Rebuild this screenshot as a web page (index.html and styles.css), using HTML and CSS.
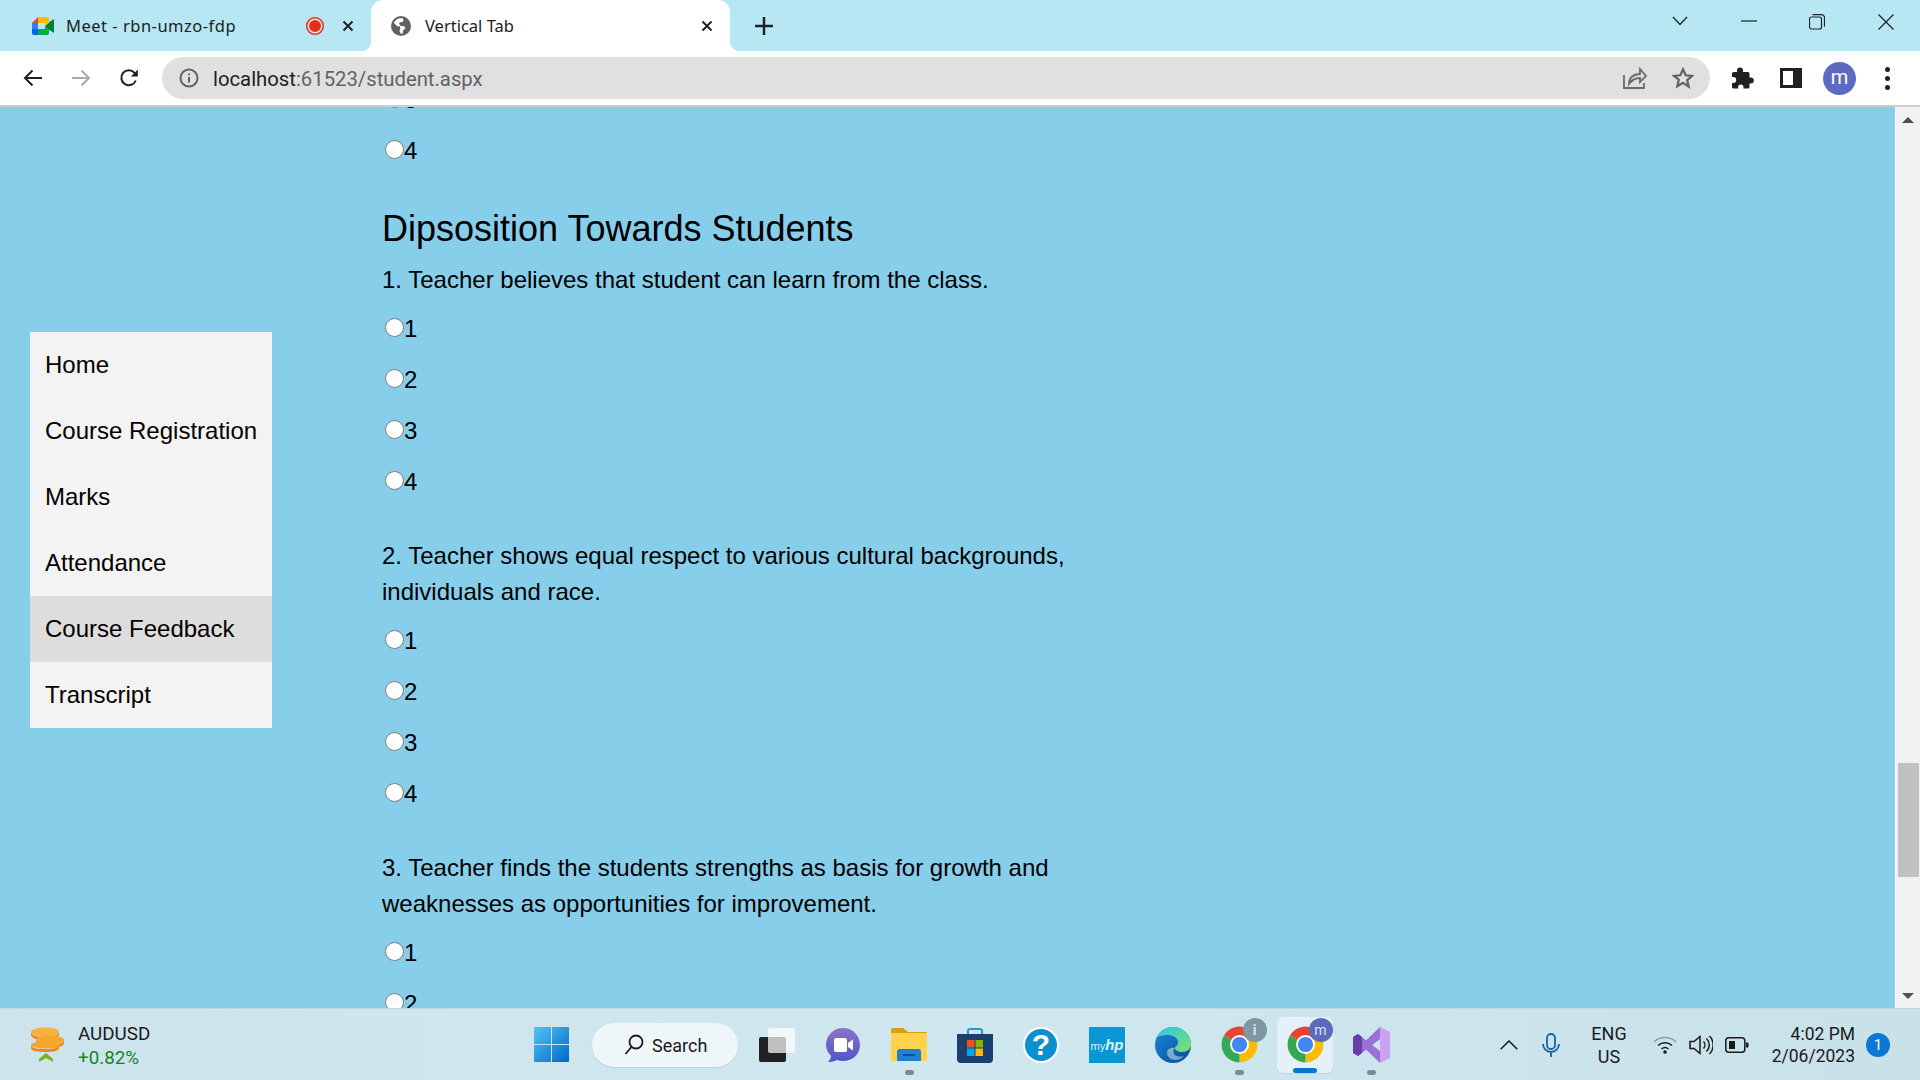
FILE: index.html
```html
<!DOCTYPE html>
<html lang="en">
<head>
<meta charset="utf-8">
<title>Vertical Tab</title>
<link rel="stylesheet" href="styles.css">
</head>
<body>
<svg class="defs" width="0" height="0">
  <symbol id="chrome" viewBox="0 0 48 48">
    <path fill="#ea4335" d="M24 24L6.7 14A20 20 0 0 1 41.3 14Z"/>
    <path fill="#fbbc04" d="M24 24L41.3 14A20 20 0 0 1 24 44Z"/>
    <path fill="#34a853" d="M24 24L24 44A20 20 0 0 1 6.7 14Z"/>
    <circle cx="24" cy="24" r="10.5" fill="#fff"/>
    <circle cx="24" cy="24" r="8.5" fill="#4285f4"/>
  </symbol>
</svg>

<header class="tabstrip">
  <div class="tab tab-meet">
    <svg class="fav-meet" viewBox="0 0 24 20" width="24" height="20">
      <path fill="#00832d" d="M14 10l3-3 6-4v14l-6-4z"/>
      <path fill="#0066da" d="M1 13v4a2 2 0 0 0 2 2h4v-6z"/>
      <path fill="#e94235" d="M7 1L1 7h6z"/>
      <path fill="#2684fc" d="M1 7h6v6H1z"/>
      <path fill="#00ac47" d="M7 13h7v-3l4 3v4a2 2 0 0 1-2 2H7z"/>
      <path fill="#ffba00" d="M7 1h9a2 2 0 0 1 2 2v4l-4 3V7H7z"/>
    </svg>
    <span class="tab-title">Meet - rbn-umzo-fdp</span>
    <span class="rec"></span>
    <svg class="tab-x" viewBox="0 0 12 12" width="12" height="12"><path d="M1.5 1.5l9 9M10.5 1.5l-9 9"/></svg>
  </div>
  <div class="tab tab-active">
    <svg class="fav-globe" viewBox="0 0 20 20" width="20" height="20">
      <circle cx="10" cy="10" r="10" fill="#5f6368"/>
      <path fill="#fff" d="M9 2.2C6 2.6 3.9 4.6 2.9 7l3.6 3.4 2.3-.2.6 2.4-1 2.2 1.3 2.9c.6 0 1.300-.1 1.800-.2l.9-3.600 2-1.700-1.500-2.200H9.600L8 7.300l1.600-1.400 1.700.4L12.600 4 11.500 2.300z"/>
    </svg>
    <span class="tab-title">Vertical Tab</span>
    <svg class="tab-x" viewBox="0 0 12 12" width="12" height="12"><path d="M1.500 1.500l9 9M10.500 1.500l-9 9"/></svg>
  </div>
  <svg class="newtab" viewBox="0 0 18 18" width="18" height="18"><path d="M9 0v18M0 9h18"/></svg>
  <div class="winctl">
    <svg class="ctl ctl-chev" viewBox="0 0 16 10" width="16" height="10"><path d="M1 1l7 7.500L15 1"/></svg>
    <svg class="ctl ctl-min" viewBox="0 0 16 2" width="16" height="2"><path d="M0 1h16"/></svg>
    <svg class="ctl ctl-max" viewBox="0 0 16 16" width="16" height="16"><rect x=".5" y="3" width="12" height="12" rx="2"/><path d="M3.500 .7h9a3 3 0 0 1 3 3v9"/></svg>
    <svg class="ctl ctl-close" viewBox="0 0 16 16" width="16" height="16"><path d="M.5 .5l15 15M15.500 .5l-15 15"/></svg>
  </div>
</header>

<nav class="toolbar">
  <svg class="tb tb-back" viewBox="0 0 20 20" width="20" height="20"><path d="M19 10H2M9.500 2.500L2 10l7.500 7.500"/></svg>
  <svg class="tb tb-fwd" viewBox="0 0 20 20" width="20" height="20"><path d="M1 10h17M10.500 2.500L18 10l-7.500 7.500"/></svg>
  <svg class="tb tb-reload" viewBox="0 0 20 20" width="20" height="20"><path d="M16.800 12.500A7.500 7.500 0 1 1 15.500 4.800L18 7"/><path class="solid" d="M18.800 1.500v7h-7z"/></svg>
  <div class="omnibox">
    <svg class="info" viewBox="0 0 20 20" width="20" height="20"><circle cx="10" cy="10" r="8.500"/><path d="M10 9v5.500M10 5.500v1.800"/></svg>
    <span class="url"><b>localhost</b>:61523/student.aspx</span>
    <svg class="share" viewBox="0 0 24 22" width="24" height="22"><path d="M1 8v13h20v-5"/><path d="M6 17c0-6 4-10 11-10V2l6 7-6 6v-4c-5 0-8 1.500-11 6z"/></svg>
    <svg class="star" viewBox="0 0 24 24" width="22" height="22"><path d="M12 2.500l2.900 6.500 7 .7-5.300 4.700 1.600 7L12 17.200 5.800 20.900l1.600-7L2.100 9.700l7-.7z"/></svg>
  </div>
  <svg class="puzzle" viewBox="0 0 24 24" width="24" height="24"><path fill="#202124" d="M9 1.500a3 3 0 0 1 3 3V6h5a1.500 1.500 0 0 1 1.500 1.500v4h1.300a3 3 0 0 1 0 6h-1.300V21a1.500 1.500 0 0 1-1.500 1.500h-4.500v-1.200a2.700 2.700 0 0 0-5.400 0v1.200H2.500A1.500 1.500 0 0 1 1 21v-4h1.200a3 3 0 0 0 0-6H1V7.500A1.500 1.500 0 0 1 2.500 6H6V4.500a3 3 0 0 1 3-3z"/></svg>
  <span class="panel"><span class="panel-in"></span></span>
  <span class="avatar">m</span>
  <span class="kebab"><i></i><i></i><i></i></span>
</nav>

<div class="viewport">
  <aside class="side">
    <ul class="menu">
      <li>Home</li>
      <li>Course Registration</li>
      <li>Marks</li>
      <li>Attendance</li>
      <li class="current">Course Feedback</li>
      <li>Transcript</li>
    </ul>
  </aside>
  <main class="main">
    <form class="form">
      <label class="opt"><input type="radio" name="p3">3</label>
      <label class="opt"><input type="radio" name="p3">4</label>
      <h2 class="heading">Dipsosition Towards Students</h2>
      <p class="q">1. Teacher believes that student can learn from the class.</p>
      <label class="opt"><input type="radio" name="q1">1</label>
      <label class="opt"><input type="radio" name="q1">2</label>
      <label class="opt"><input type="radio" name="q1">3</label>
      <label class="opt"><input type="radio" name="q1">4</label>
      <p class="q q-next">2. Teacher shows equal respect to various cultural backgrounds, individuals and race.</p>
      <label class="opt"><input type="radio" name="q2">1</label>
      <label class="opt"><input type="radio" name="q2">2</label>
      <label class="opt"><input type="radio" name="q2">3</label>
      <label class="opt"><input type="radio" name="q2">4</label>
      <p class="q q-next">3. Teacher finds the students strengths as basis for growth and weaknesses as opportunities for improvement.</p>
      <label class="opt"><input type="radio" name="q3">1</label>
      <label class="opt"><input type="radio" name="q3">2</label>
    </form>
  </main>
  <div class="scrollbar">
    <span class="arrow arrow-up"></span>
    <span class="thumb"></span>
    <span class="arrow arrow-down"></span>
  </div>
</div>

<footer class="taskbar">
  <div class="widget">
    <svg class="coins" viewBox="0 0 36 36" width="36" height="36">
      <ellipse cx="15" cy="5" rx="14" ry="4.500" fill="#f7b23b"/>
      <path d="M1 5v3c0 3 6 5 14 5s14-2 14-5V5c0 3-6 5-14 5S1 8 1 5z" fill="#ea8a1c"/>
      <ellipse cx="20" cy="13" rx="14" ry="4.500" fill="#f9a62b"/>
      <path d="M6 13v3c0 3 6 5 14 5s14-2 14-5v-3c0 3-6 5-14 5S6 16 6 13z" fill="#ea8a1c"/>
      <ellipse cx="15" cy="18" rx="14" ry="3.500" fill="#f7a52c"/>
      <path d="M1 18v3c0 3 6 4 14 4s14-1 14-4v-3c0 3-6 4-14 4S1 21 1 18z" fill="#ea8a1c"/>
      <path d="M16 26l7 6v3l-7-4-7 4v-3z" fill="#6fb51e"/>
    </svg>
    <div class="quote">
      <span class="sym">AUDUSD</span>
      <span class="chg">+0.82%</span>
    </div>
  </div>
  <span class="start">
    <svg viewBox="0 0 35 35" width="35" height="35">
      <defs><linearGradient id="win" x1="0" y1="0" x2="1" y2="1"><stop offset="0" stop-color="#52c4f7"/><stop offset="1" stop-color="#0067c8"/></linearGradient></defs>
      <path fill="url(#win)" d="M1 0h16v17H0V1a1 1 0 0 1 1-1zM18 0h16a1 1 0 0 1 1 1v16H18zM0 18h17v17H1a1 1 0 0 1-1-1zM18 18h17v16a1 1 0 0 1-1 1H18z"/>
    </svg>
  </span>
  <div class="search">
    <svg viewBox="0 0 20 22" width="20" height="22"><circle cx="12" cy="8" r="6.500"/><path d="M7.500 13L1.500 20"/></svg>
    <span>Search</span>
  </div>
  <div class="apps">
    <span class="slot">
      <svg viewBox="0 0 36 34" width="36" height="34"><rect y="9" width="27" height="25" rx="2" fill="#222"/><rect x="9" width="27" height="25" rx="2" fill="#fff" fill-opacity=".72"/></svg>
    </span>
    <span class="slot">
      <svg viewBox="0 0 34 34" width="34" height="34"><defs><linearGradient id="chat" x1="0" y1="0" x2="0" y2="1"><stop offset="0" stop-color="#8c73c9"/><stop offset="1" stop-color="#4f55c8"/></linearGradient></defs><path fill="url(#chat)" d="M17 0c9.500 0 17 7.500 17 17s-7.500 16-17 16c-2 0-4-.300-6-1-3 1.500-6 2-9 2 2-2 3-4 3-6C2 25 0 21 0 17 0 7.500 7.500 0 17 0z"/><rect x="8" y="10" width="13" height="14" rx="2" fill="#fff"/><path d="M22 15l5-3.500v11L22 19z" fill="#fff"/></svg>
    </span>
    <span class="slot running">
      <svg viewBox="0 0 36 34" width="36" height="34"><path fill="#d9a011" d="M0 2a2 2 0 0 1 2-2h10l5 4h19v6H0z"/><path fill="#ffd24d" d="M0 5h36v27a1 1 0 0 1-1 1H1a1 1 0 0 1-1-1z"/><path fill="#1f7fd0" d="M6 33V24a3 3 0 0 1 3-3h18a3 3 0 0 1 3 3v9z"/><rect x="12" y="26" width="12" height="2" fill="#0e4f94"/></svg>
    </span>
    <span class="slot">
      <svg viewBox="0 0 36 36" width="36" height="36"><path fill="none" stroke="#1b9bd8" stroke-width="2" d="M11 8V4a2 2 0 0 1 2-2h10a2 2 0 0 1 2 2v4"/><path fill="#1b3f6e" d="M0 7h36v25a4 4 0 0 1-4 4H4a4 4 0 0 1-4-4z"/><path fill="#f25022" d="M10 13h7.500v7.500H10z"/><path fill="#7fba00" d="M18.500 13H26v7.500h-7.500z"/><path fill="#00a4ef" d="M10 21.500h7.500V29H10z"/><path fill="#ffb900" d="M18.500 21.500H26V29h-7.500z"/></svg>
    </span>
    <span class="slot">
      <span class="help">?</span>
    </span>
    <span class="slot">
      <span class="myhp">my<i>hp</i></span>
    </span>
    <span class="slot">
      <svg viewBox="0 0 36 36" width="36" height="36"><defs><linearGradient id="edge1" x1="0" y1="0" x2="1" y2="1"><stop offset="0" stop-color="#2fc4e8"/><stop offset="1" stop-color="#7be36c"/></linearGradient><linearGradient id="edge2" x1="0" y1="0" x2="1" y2="1"><stop offset="0" stop-color="#1a87d8"/><stop offset="1" stop-color="#0b4a96"/></linearGradient></defs><circle cx="18" cy="18" r="18" fill="url(#edge2)"/><path fill="url(#edge1)" d="M2 10C5 4 11 0 18 0c10 0 18 8 18 17 0 5-4 8-9 8-4 0-7-2-7-4 0-2 3-2 3-6 0-4-5-7-10-7C8 8 4 9 2 10z"/><path fill="#cdeaf2" d="M20 21c-3-1-8 0-8 5 0 4 4 7 8 7 3 0 6-1 9-4-3 1-8 1-10-2-1-2-1-4 1-6z" opacity=".55"/></svg>
    </span>
    <span class="slot running">
      <span class="chrome-wrap">
        <svg viewBox="0 0 48 48" width="43" height="43"><use href="#chrome"/></svg>
        <span class="badge badge-i">i</span>
      </span>
    </span>
    <span class="slot active">
      <span class="chrome-wrap">
        <svg viewBox="0 0 48 48" width="43" height="43"><use href="#chrome"/></svg>
        <span class="badge badge-m">m</span>
      </span>
    </span>
    <span class="slot running">
      <svg viewBox="0 0 37 36" width="37" height="36"><path fill="#c9a2f2" d="M27 0l10 5v26l-10 5z"/><path fill="#9b6fd8" d="M27 0v12L14 22l-9 7-5-3z"/><path fill="#9b6fd8" d="M27 36V24L14 14 5 7 0 10z"/><path fill="#6a3fa5" d="M0 10l5-3 4 3v16l-4 3-5-3z"/></svg>
    </span>
  </div>
  <div class="tray">
    <svg class="tray-chev" viewBox="0 0 18 10" width="18" height="10"><path d="M.7 9.300L9 1l8.300 8.300"/></svg>
    <span class="tray-mic">
      <svg viewBox="0 0 18 24" width="18" height="24"><rect x="5" y="1" width="8" height="15" rx="4"/><path d="M1 11a8 8 0 0 0 16 0M9 19v5"/></svg>
    </span>
    <span class="lang">ENG<br>US</span>
    <span class="tray-wifi">
      <svg viewBox="0 0 24 18" width="24" height="18"><path class="dim" d="M1 6a16 16 0 0 1 22 0"/><path d="M5 9.500a10.500 10.500 0 0 1 14 0M8.500 13a5.500 5.500 0 0 1 7 0"/><circle class="dot" cx="12" cy="16" r="1.800"/></svg>
    </span>
    <span class="tray-vol">
      <svg viewBox="0 0 24 22" width="24" height="22"><path d="M1 7.500h4L11 2.500v17l-6-5H1zM14.500 7.500a5 5 0 0 1 0 7M17.500 4.500a9 9 0 0 1 0 13M20.500 2a13 13 0 0 1 0 18"/></svg>
    </span>
    <span class="tray-bat">
      <svg viewBox="0 0 24 16" width="24" height="16"><rect x=".8" y=".8" width="19" height="14.400" rx="3"/><rect class="dot" x="4" y="4" width="6" height="8"/><path class="dot" d="M21 5.500h1.500a1 1 0 0 1 1 1v3a1 1 0 0 1-1 1H21z"/></svg>
    </span>
    <span class="clock">4:02 PM<br>2/06/2023</span>
    <span class="notif">1</span>
  </div>
</footer>
</body>
</html>
```
FILE: styles.css
```css
* { box-sizing: border-box; }
html, body { margin: 0; height: 100%; overflow: hidden; }
body {
  width: 1920px;
  height: 1080px;
  display: flex;
  flex-direction: column;
  font-family: "Liberation Sans", Arial, sans-serif;
  color: #000;
}
.defs { position: absolute; }

/* tab strip */
.tabstrip {
  height: 51px;
  flex: none;
  display: flex;
  align-items: stretch;
  background: #b6e7f3;
  font-family: "Noto Sans", Roboto, sans-serif;
  font-size: 16.500px;
  color: #202124;
}
.tab { display: flex; align-items: center; position: relative; }
.tab-meet { width: 371px; padding-left: 31px; }
.tab-meet .tab-title { margin-left: 11px; width: 240px; white-space: nowrap; letter-spacing: .5px; }
.rec {
  width: 18px; height: 18px; border-radius: 50%;
  background: #e0301e;
  box-shadow: inset 0 0 0 1.500px #e0301e, inset 0 0 0 3px #fde8e4;
  flex: none;
}
.tab-x { flex: none; fill: none; stroke: #202124; stroke-width: 2; }
.tab-meet .tab-x { margin-left: 18px; }
.tab-active {
  width: 359px;
  padding-left: 20px;
  background: #fff;
  border-radius: 12px 12px 0 0;
}
.tab-active::before, .tab-active::after {
  content: ""; position: absolute; bottom: 0; width: 10px; height: 10px;
}
.tab-active::before { left: -10px; background: radial-gradient(circle at 0 0, transparent 10px, #fff 10.500px); }
.tab-active::after { right: -10px; background: radial-gradient(circle at 100% 0, transparent 10px, #fff 10.500px); }
.tab-active .tab-title { margin-left: 14px; width: 276px; }
.newtab { align-self: center; margin-left: 25px; fill: none; stroke: #202124; stroke-width: 2.500; }
.winctl { margin-left: auto; display: flex; align-items: flex-start; padding: 0 26px 0 0; }
.ctl { fill: none; stroke: #202124; stroke-width: 1.200; margin-top: 14px; flex: none; }
.ctl-chev { margin-top: 16px; margin-right: 53px; }
.ctl-min { margin-top: 20px; margin-right: 52px; }
.ctl-max { margin-right: 53px; }

/* toolbar */
.toolbar {
  height: 56px;
  flex: none;
  display: flex;
  align-items: center;
  background: #fff;
  border-bottom: 2px solid #cdcdcd;
  padding-left: 23px;
}
.tb { flex: none; fill: none; stroke: #202124; stroke-width: 2; }
.tb-fwd { margin-left: 28px; stroke: #a8a9ab; }
.tb-reload { margin-left: 28px; }
.tb-reload .solid { fill: #202124; stroke: none; }
.omnibox {
  margin-left: 23px;
  width: 1548px;
  height: 42px;
  flex: none;
  border-radius: 21px;
  background: #e0e0e0;
  display: flex;
  align-items: center;
  padding-left: 17px;
  font-family: Roboto, "Noto Sans", sans-serif;
  font-size: 20.300px;
  color: #5f6368;
}
.info { flex: none; fill: none; stroke: #5f6368; stroke-width: 2; }
.url { margin-left: 14px; padding-top: 1px; }
.url b { font-weight: 400; color: #202124; }
.share { margin-left: auto; flex: none; fill: none; stroke: #6a6b6d; stroke-width: 1.800; }
.star { margin-left: 25px; margin-right: 16px; flex: none; fill: none; stroke: #5f6368; stroke-width: 2.400; }
.puzzle { margin-left: 21px; flex: none; }
.panel {
  margin-left: 25px; width: 22px; height: 20px; flex: none;
  background: #202124; padding: 3px 9px 3px 3px; display: block;
}
.panel-in { display: block; width: 100%; height: 100%; background: #fff; }
.avatar {
  margin-left: 21px; width: 33px; height: 33px; flex: none; border-radius: 50%;
  background: #5c6bc0; color: #fff; text-align: center;
  font: 20px/30px Roboto, sans-serif;
}
.kebab { margin-left: 29px; display: flex; flex-direction: column; gap: 4px; flex: none; }
.kebab i { display: block; width: 5px; height: 5px; border-radius: 50%; background: #202124; }

/* page */
.viewport {
  flex: 1;
  min-height: 0;
  display: flex;
  background: #87ceeb;
  font-size: 24px;
  line-height: 36px;
}
.side { width: 382px; flex: none; padding: 225px 0 0 30px; }
.menu { list-style: none; margin: 0; padding: 0; width: 242px; background: #f3f3f3; }
.menu li { height: 66px; padding: 15px; line-height: 36px; white-space: nowrap; }
.menu .current { background: #dddddd; }
.main { flex: 1; min-width: 0; overflow: hidden; }
.form { width: 700px; margin-top: -25px; }
.opt { display: block; height: 36px; margin-bottom: 15px; }
.opt input { width: 19px; height: 19px; margin: 0 0 0 3px; }
.heading { font-size: 36px; font-weight: 400; line-height: 42px; margin: 39px 0 12px; }
.q { margin: 0 0 13px; }
.q-next { margin-top: 38px; }
.scrollbar {
  width: 25px; flex: none; background: #f1f1f1; border-left: 1px solid #fff;
  display: flex; flex-direction: column; align-items: center; padding-top: 10px;
}
.arrow { width: 0; height: 0; border-left: 6px solid transparent; border-right: 6px solid transparent; flex: none; }
.arrow-up { border-bottom: 6px solid #505050; }
.arrow-down { border-top: 6px solid #505050; margin-top: 116px; }
.thumb { width: 21px; height: 114px; background: #c1c1c1; margin-top: 640px; flex: none; }

/* taskbar */
.taskbar {
  height: 72px;
  flex: none;
  display: flex;
  align-items: center;
  background: linear-gradient(90deg, #cde4ec, #cfe7ef 50%, #c9e1e9);
  border-top: 1px solid #c0d8e0;
  font-family: Roboto, "Noto Sans", sans-serif;
  color: #1a1a1a;
  font-size: 18px;
}
.widget { width: 518px; flex: none; display: flex; align-items: center; padding-left: 30px; }
.quote { margin-left: 12px; padding-top: 3px; display: flex; flex-direction: column; line-height: 24.500px; font-size: 18.800px; }
.chg { color: #18851c; }
.start { width: 66px; flex: none; display: flex; justify-content: center; }
.start svg { display: block; }
.search {
  margin-left: 8px; width: 146px; height: 44px; flex: none; border-radius: 22px;
  background: #eef6f9; box-shadow: 0 1px 1px #bcd3db;
  display: flex; align-items: center; padding-left: 32px; gap: 8px;
}
.search span { padding-top: 2px; }
.search svg { fill: none; stroke: #1a1a1a; stroke-width: 1.800; }
.apps { margin-left: 6px; display: flex; flex: none; }
.slot { width: 66px; height: 56px; flex: none; display: flex; align-items: center; justify-content: center; position: relative; }
.running::after, .active::after {
  content: ""; position: absolute; left: 50%; border-radius: 3px;
}
.running::after { bottom: -2px; width: 9px; height: 5px; margin-left: -4px; background: #7c8c94; }
.active::before {
  content: ""; position: absolute; left: 5px; right: 5px; top: 0; bottom: 0;
  border-radius: 6px; background: #e5f1f6; box-shadow: 0 1px 1px #bcd3db;
}
.active::after { bottom: 0; width: 24px; height: 5px; margin-left: -12px; background: #0078d4; }
.help {
  width: 36px; height: 36px; border-radius: 50%; background: #0a8fd0; border: 2px solid #fff;
  color: #fff; font: 700 30px/32px "Liberation Sans", sans-serif; text-align: center;
}
.myhp {
  width: 36px; height: 36px; background: #0b97d6; color: #dff3fb; white-space: nowrap;
  font: 11px/36px "Liberation Sans", sans-serif; text-align: center;
}
.myhp i { font-weight: 700; font-size: 15px; }
.chrome-wrap { position: relative; display: block; width: 43px; height: 43px; }
.chrome-wrap svg { display: block; }
.badge {
  position: absolute; right: -6px; top: -5px; width: 24px; height: 24px; border-radius: 50%;
  color: #d9e4ea; text-align: center; font: 700 14px/24px Roboto, sans-serif;
}
.badge-i { background: #7f97a5; }
.badge-m { background: #5c6bc0; font-weight: 400; }
.tray { margin-left: auto; display: flex; align-items: center; padding-right: 30px; }
.tray > span { display: flex; justify-content: center; align-items: center; flex: none; }
.tray svg { fill: none; stroke: #1a1a1a; stroke-width: 1.500; display: block; }
.tray .dot { fill: #1a1a1a; stroke: none; }
.tray .dim { stroke: #8a9aa0; }
.tray-chev { flex: none; margin-right: 9px; }
.tray-mic { width: 47px; }
.tray .tray-mic svg { stroke: #1c5fa8; stroke-width: 1.800; }
.tray > .lang { display: block; width: 70px; text-align: center; line-height: 23px; }
.tray-wifi { width: 39px; padding-left: 2px; }
.tray-vol, .tray-bat { width: 36px; }
.tray > .clock { display: block; width: 105px; padding-right: 5px; text-align: right; line-height: 22px; white-space: nowrap; font-size: 17.500px; }
.tray > .notif {
  width: 24px; height: 24px; margin-left: 6px; border-radius: 50%;
  background: #0a78d4; color: #fff; font-size: 15px;
}
```
